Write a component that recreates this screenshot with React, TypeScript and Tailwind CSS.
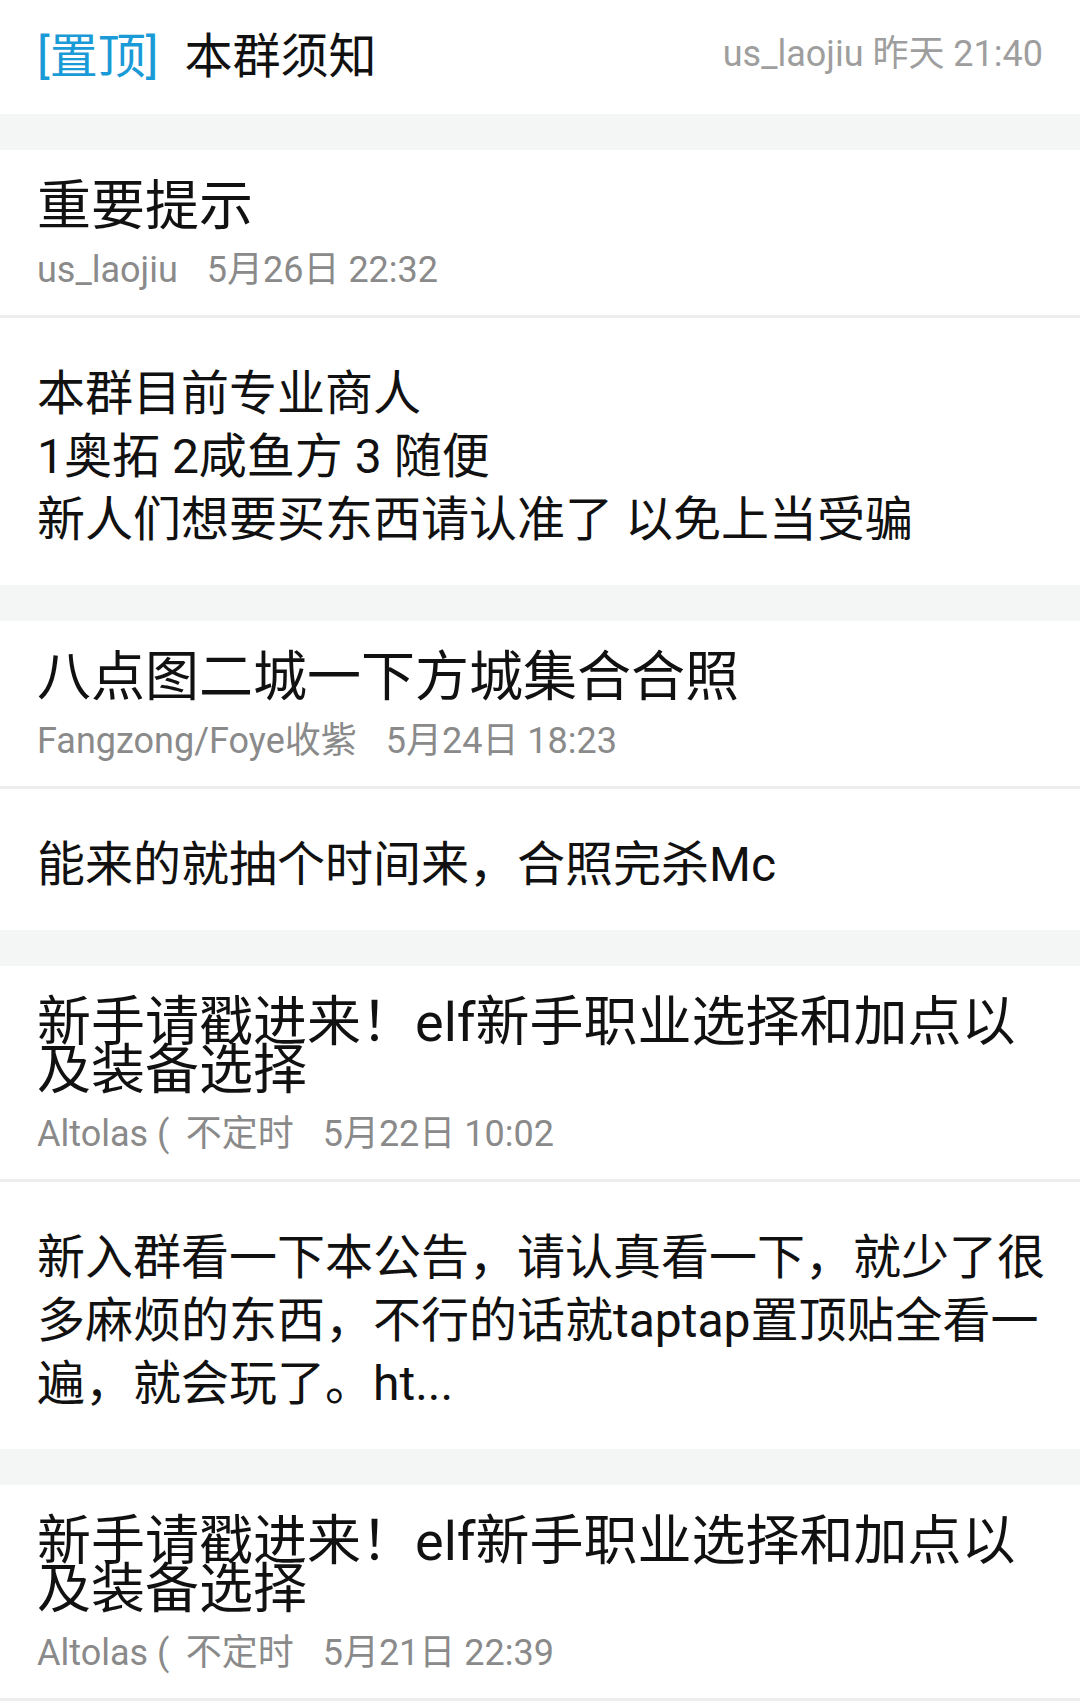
type Post = {
  title: string;
  author: string;
  time: string;
  body: string[];
};

const posts: Post[] = [
  {
    title: "重要提示",
    author: "us_laojiu",
    time: "5月26日 22:32",
    body: ["本群目前专业商人", "1奥拓 2咸鱼方 3 随便", "新人们想要买东西请认准了 以免上当受骗"],
  },
  {
    title: "八点图二城一下方城集合合照",
    author: "Fangzong/Foye收紫",
    time: "5月24日 18:23",
    body: ["能来的就抽个时间来，合照完杀Mc"],
  },
  {
    title: "新手请戳进来！elf新手职业选择和加点以及装备选择",
    author: "Altolas ( \u2009不定时",
    time: "5月22日 10:02",
    body: [
      "新入群看一下本公告，请认真看一下，就少了很",
      "多麻烦的东西，不行的话就taptap置顶贴全看一",
      "遍，就会玩了。ht...",
    ],
  },
  {
    title: "新手请戳进来！elf新手职业选择和加点以及装备选择",
    author: "Altolas ( \u2009不定时",
    time: "5月21日 22:39",
    body: [],
  },
];

const Gap = () => <div className="h-[36px] bg-[#f4f5f5]" />;

const PostCard = ({ post }: { post: Post }) => {
  return (
    <div className="bg-white">
      <div className="pl-[37px] pr-[37px] pt-[33px] pb-[22px] border-b-[3px] border-[#ededed]">
        <div className="text-[54px] leading-[48px] text-[#111]">{post.title}</div>
        <div className="mt-[17px] text-[36px] leading-[45px] text-[#8a8a8a] whitespace-pre">
          <span>{post.author}</span>
          <span className="ml-[29px]">{post.time}</span>
        </div>
      </div>
      {post.body.length > 0 && (
        <div className="pl-[37px] pr-[30px] pt-[44px] pb-[34px] text-[48px] leading-[63px] text-[#111] whitespace-nowrap">
          {post.body.map((line, i) => (
            <div key={i}>{line}</div>
          ))}
        </div>
      )}
    </div>
  );
};

export default function App() {
  return (
    <div className="w-[1080px] h-[1706px] overflow-hidden bg-white font-['Roboto','Noto_Sans_CJK_SC',sans-serif]">
      <div className="h-[114px] px-[37px] flex items-center justify-between">
        <div className="flex items-center text-[48px] leading-[60px]">
          <span className="text-[#1a9bd7]">[置顶]</span>
          <span className="ml-[26px] text-[#111]">本群须知</span>
        </div>
        <div className="mb-[6px] text-[36px] leading-[45px] text-[#9e9e9e]">us_laojiu 昨天 21:40</div>
      </div>
      <Gap />
      <PostCard post={posts[0]} />
      <Gap />
      <PostCard post={posts[1]} />
      <Gap />
      <PostCard post={posts[2]} />
      <Gap />
      <PostCard post={posts[3]} />
    </div>
  );
}
